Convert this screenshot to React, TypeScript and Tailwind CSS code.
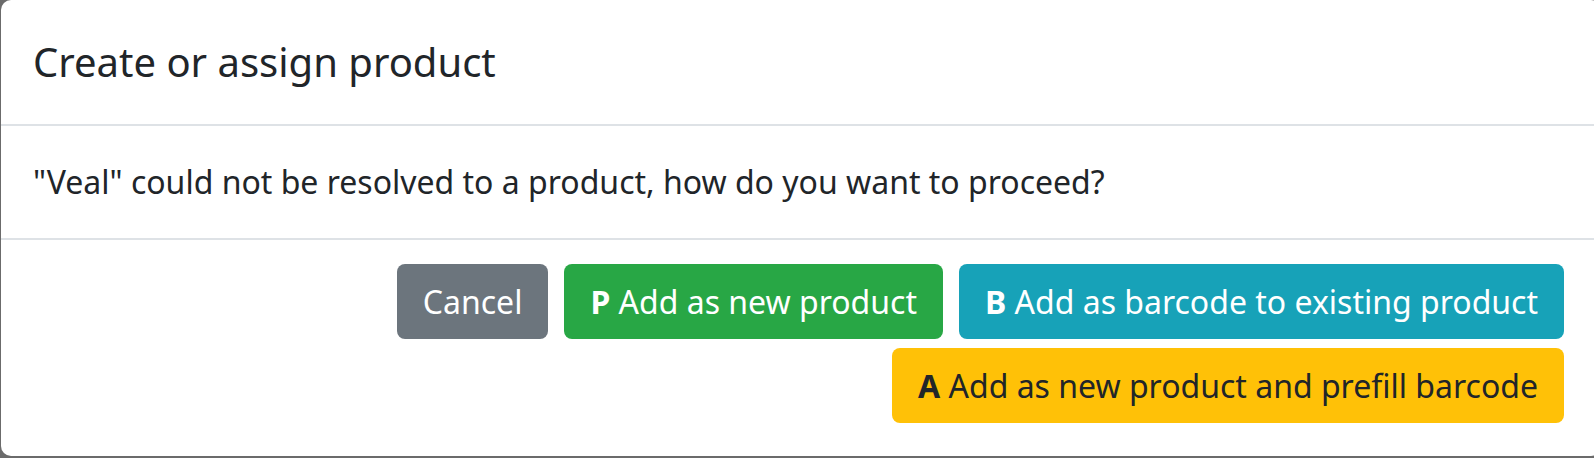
import React from "react";

export default function App() {
  return (
    <div
      className="w-[1594px] h-[458px] bg-[#6b6b6b] pl-[1px] pb-[2px] overflow-hidden"
      style={{ fontFamily: '"Noto Sans", "Open Sans", sans-serif' }}
    >
      <div className="w-[1600px] h-full bg-white rounded-[10px] flex flex-col text-[#212529]">
        <div className="h-[126px] shrink-0 border-b-2 border-[#dee2e6] px-[32px] flex items-center">
          <h5 className="text-[40px] leading-[60px] font-normal m-0">Create or assign product</h5>
        </div>
        <div className="h-[114px] shrink-0 border-b-2 border-[#dee2e6] px-[32px] flex items-center">
          <p className="text-[32px] leading-[48px] m-0">
            "Veal" could not be resolved to a product, how do you want to proceed?
          </p>
        </div>
        <div className="w-[1593px] pt-[24px] pr-[30px] flex flex-wrap justify-end gap-x-[16px] gap-y-[9px]">
          <button className="h-[75px] px-[26px] rounded-[8px] bg-[#6c757d] text-white text-[32px] leading-[48px]">
            Cancel
          </button>
          <button className="h-[75px] px-[26px] rounded-[8px] bg-[#28a745] text-white text-[32px] leading-[48px]">
            <span className="font-bold">P</span> Add as new product
          </button>
          <button className="h-[75px] px-[26px] rounded-[8px] bg-[#17a2b8] text-white text-[32px] leading-[48px]">
            <span className="font-bold">B</span> Add as barcode to existing product
          </button>
          <button className="h-[75px] px-[26px] rounded-[8px] bg-[#ffc107] text-[#212529] text-[32px] leading-[48px]">
            <span className="font-bold">A</span> Add as new product and prefill barcode
          </button>
        </div>
      </div>
    </div>
  );
}
